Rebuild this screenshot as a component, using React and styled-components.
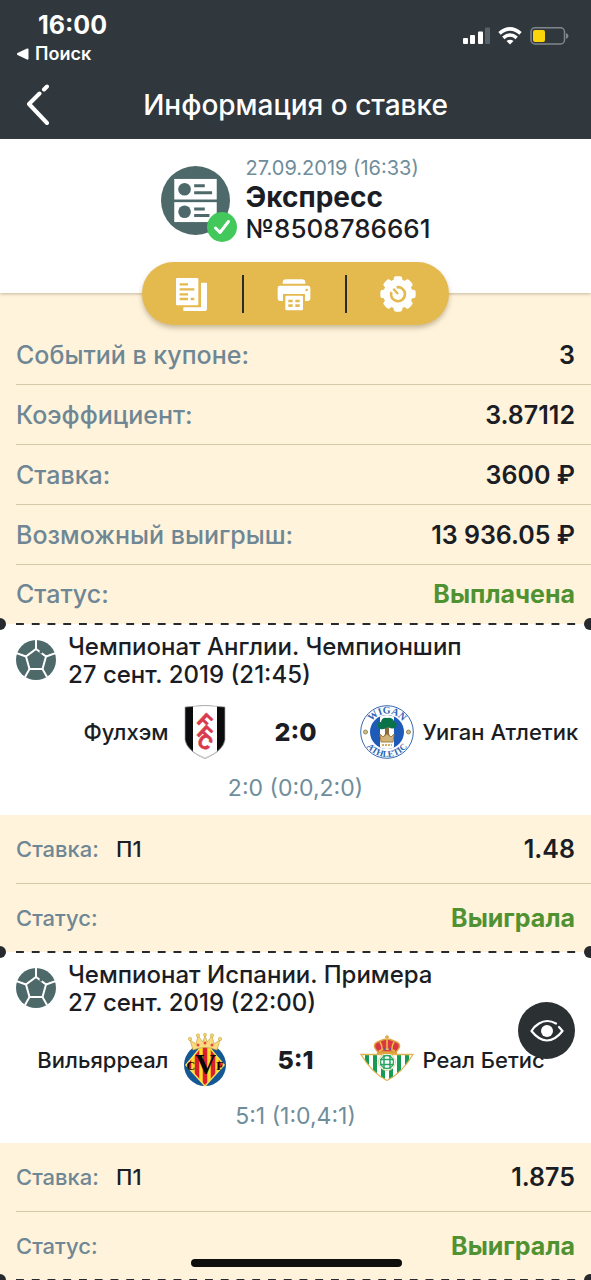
import React from "react";
import styled, { createGlobalStyle } from "styled-components";

const GlobalStyle = createGlobalStyle`
  *, *::before, *::after { box-sizing: border-box; }
  body {
    margin: 0;
    background: #fff3dc;
    color: #1b1d24;
    font-family: Inter, "Liberation Sans", sans-serif;
  }
  button { font: inherit; color: inherit; background: none; border: 0; padding: 0; cursor: pointer; }
  h1, h2, p, dl, dt, dd { margin: 0; font-weight: inherit; }
  svg { display: block; }
`;

const Screen = styled.div`
  height: 100vh;
  overflow: hidden auto;
  scrollbar-width: none;
`;

const Header = styled.header`
  background: #30383e;
  color: #fff;
`;

const StatusBar = styled.div`
  display: flex;
  justify-content: space-between;
  align-items: flex-start;
  height: 70px;
  padding: 11px 22px 0 17px;
`;

const Clock = styled.time`
  display: block;
  padding-left: 21px;
  font-size: 25px;
  line-height: 28px;
  font-weight: 700;
`;

const BackToApp = styled.a`
  display: flex;
  align-items: center;
  gap: 6px;
  padding-top: 4px;
  font-size: 18px;
  line-height: 22px;
  font-weight: 600;
  color: inherit;
  text-decoration: none;
`;

const Signals = styled.div`
  display: flex;
  align-items: center;
  gap: 8px;
  padding-top: 16px;
`;

const NavBar = styled.nav`
  display: grid;
  grid-template-columns: 78px 1fr 78px;
  align-items: center;
  height: 69px;
`;

const BackButton = styled.button`
  justify-self: start;
  margin-left: 25px;
`;

const PageTitle = styled.h1`
  text-align: center;
  white-space: nowrap;
  font-size: 28px;
  line-height: 32px;
  font-weight: 500;
`;

const Summary = styled.section`
  position: relative;
  display: flex;
  flex-direction: column;
  align-items: center;
  background: #fff;
  padding-top: 16px;
  box-shadow: 0 1px 3px rgba(90, 75, 40, 0.35);
`;

const Ticket = styled.div`
  display: flex;
  align-items: flex-start;
  gap: 16px;
  height: 107px;
`;

const TicketIcon = styled.div`
  position: relative;
  margin-top: 11px;
`;

const CheckBadge = styled.svg`
  position: absolute;
  right: -7px;
  bottom: -7px;
`;

const TicketDate = styled.p`
  font-size: 20px;
  line-height: 26px;
  color: #6f8d9a;
`;

const TicketType = styled.h2`
  font-size: 28px;
  line-height: 32px;
  font-weight: 700;
`;

const TicketNumber = styled.p`
  font-size: 26px;
  line-height: 32px;
  font-weight: 500;
`;

const Actions = styled.div`
  display: grid;
  grid-template-columns: repeat(3, 1fr);
  align-items: center;
  width: 307px;
  height: 63px;
  margin-bottom: -32px;
  border-radius: 32px;
  background: #e4ba4f;
  box-shadow: 0 3px 5px rgba(100, 80, 30, 0.35);
`;

const Action = styled.button`
  display: grid;
  place-items: center;
  height: 38px;

  &:not(:last-child) { border-right: 2px solid #2b2c2c; }
`;

const Rows = styled.dl`
  background: #fff3dc;
  padding-top: ${(p) => (p.$under ? "32px" : "0")};
`;

const Row = styled.div`
  display: flex;
  align-items: center;
  height: ${(p) => (p.$tall ? "69px" : "60px")};
  margin-left: 16px;
  padding-right: 16px;
  border-bottom: 1px solid #d5c8a5;

  &:last-child { border-bottom: 0; height: ${(p) => (p.$tall ? "67px" : "58px")}; }
`;

const Label = styled.dt`
  font-size: ${(p) => (p.$small ? "22px" : "25px")};
  line-height: 30px;
  font-weight: 500;
  color: #6f8794;
`;

const Pick = styled.dd`
  margin-left: 17px;
  font-size: 22px;
  line-height: 30px;
  font-weight: 500;
`;

const Value = styled.dd`
  margin-left: auto;
  font-size: 25px;
  line-height: 30px;
  font-weight: ${(p) => (p.$good ? 700 : 600)};
  color: ${(p) => (p.$good ? "#509232" : "#1b1d24")};
`;

const Tear = styled.div`
  position: relative;
  height: 2px;
  padding: 0 8px 0 16px;
  background: linear-gradient(#fff3dc 50%, #fff 50%);

  &::before, &::after {
    content: "";
    position: absolute;
    top: -5px;
    width: 12px;
    height: 12px;
    border-radius: 50%;
    background: #262a2f;
  }
  &::before { left: -6px; }
  &::after { right: -5px; }
`;

const Dashes = styled.div`
  height: 2px;
  background: linear-gradient(90deg, #262a2f 50%, transparent 50%) 0 0 / calc(100% / 36) 2px;
`;

const Match = styled.section`
  background: #fff;
`;

const MatchHead = styled.div`
  display: flex;
  gap: 12px;
  padding: 8px 16px 0;
`;

const BallIcon = styled.svg`
  flex: none;
  margin-top: 7px;
`;

const League = styled.h2`
  font-size: 24px;
  line-height: 28px;
  font-weight: 500;
`;

const Teams = styled.div`
  display: grid;
  grid-template-columns: minmax(0, 1fr) 54px 128px 54px minmax(0, 1fr);
  align-items: center;
  height: 60px;
  margin-top: 13px;
`;

const Team = styled.span`
  font-size: 22px;
  line-height: 28px;
  font-weight: 500;
  white-space: nowrap;
  padding: 0 9px;
  text-align: ${(p) => (p.$home ? "right" : "left")};
`;

const Score = styled.strong`
  text-align: center;
  font-size: 25px;
  line-height: 30px;
  font-weight: 800;
`;

const Periods = styled.p`
  height: 53px;
  padding-top: 12px;
  text-align: center;
  font-size: 23px;
  line-height: 28px;
  color: #6f8d9a;
`;

const WatchButton = styled.button`
  position: fixed;
  right: 16px;
  top: 1002px;
  display: grid;
  place-items: center;
  width: 57px;
  height: 57px;
  border-radius: 50%;
  background: #2b3033;
`;

const HomeIndicator = styled.div`
  position: fixed;
  left: 50%;
  bottom: 13px;
  width: 211px;
  height: 8px;
  margin-left: -105px;
  border-radius: 4px;
  background: #0e0f0d;
`;

const Cellular = () => (
  <svg width="27" height="18" viewBox="0 0 27 18" fill="#fff">
    <rect x="0" y="11" width="5" height="6" rx="1" />
    <rect x="7" y="8" width="5" height="9" rx="1" />
    <rect x="15" y="4.500" width="5" height="12.500" rx="1" />
    <rect x="22" y="0.500" width="5" height="16.500" rx="1" fill="#596168" />
  </svg>
);

const Wifi = () => (
  <svg width="24" height="18" viewBox="0 0 24 18" fill="none" stroke="#fff" strokeWidth="3.600">
    <path d="M1.500 6.400 Q12-2.500 22.500 6.400" />
    <path d="M5.300 10.800 Q12 5.200 18.700 10.800" />
    <path d="M12 17.500 L8.500 14 Q12 11.500 15.500 14Z" fill="#fff" stroke="none" />
  </svg>
);

const Battery = () => (
  <svg width="39" height="18" viewBox="0 0 39 18">
    <rect x="1" y="0.800" width="33.500" height="16.200" rx="4" fill="none" stroke="#80868b" strokeWidth="1.500" />
    <rect x="3" y="3" width="12" height="12" rx="2" fill="#fbd509" />
    <path d="M36 6 Q38.500 7 38.500 9 Q38.500 11 36 12Z" fill="#80868b" />
  </svg>
);

const DocsIcon = () => (
  <svg width="36" height="36" viewBox="0 0 108 108">
    <path d="M81 20H99V99Q99 105 93 105H28V94H81Z" fill="#fff" />
    <rect x="6" y="6" width="67" height="82" rx="3" fill="#fff" />
    <path d="M17 25H42M17 40H61M17 55H42M17 69H42M50 69H61" stroke="#e4ba4f" strokeWidth="7" />
  </svg>
);

const PrinterIcon = () => (
  <svg width="36" height="36" viewBox="0 0 108 108">
    <path d="M20 23V20Q20 10 31 10H77Q88 10 88 20V23Z" fill="#fff" />
    <path d="M12 29H96Q103 29 103 36V67Q103 75 95 75H87V54H21V75H13Q5 75 5 67V36Q5 29 12 29Z" fill="#fff" />
    <rect x="28" y="59" width="53" height="44" rx="4" fill="#fff" />
    <path d="M37 75H50M58 75H71M37 89H50M58 89H71" stroke="#e4ba4f" strokeWidth="8" />
    <circle cx="92" cy="42" r="4" fill="#e4ba4f" />
  </svg>
);

const GearIcon = () => (
  <svg width="36" height="36" viewBox="0 0 108 108">
    <g fill="#fff">
      <circle cx="54" cy="54" r="44" />
      {[0, 45, 90, 135].map((a) => (
        <rect key={a} x="41" y="1" width="26" height="106" rx="7" transform={`rotate(${a} 54 54)`} />
      ))}
    </g>
    <path d="M50 34A21 21 0 1 1 34 48" fill="none" stroke="#e4ba4f" strokeWidth="8" />
    <path d="M54 54L40 38" stroke="#e4ba4f" strokeWidth="7" />
  </svg>
);

const CouponIcon = () => (
  <svg width="69" height="69" viewBox="0 0 208 208">
    <circle cx="104" cy="104" r="104" fill="#4e696a" />
    <rect x="40" y="39" width="128" height="62" fill="#fff" />
    <rect x="40" y="109" width="128" height="60" fill="#fff" />
    <g fill="#4e696a">
      <circle cx="71" cy="70" r="19" />
      <circle cx="71" cy="138" r="19" />
      <path d="M100 55h32v9h-32zM100 76h54v9h-54zM100 125h32v9h-32zM100 145h46v9h-46z" />
    </g>
  </svg>
);

const Ball = () => (
  <BallIcon width="40" height="40" viewBox="0 0 40 40">
    <circle cx="20" cy="20" r="20" fill="#4e696a" />
    <g fill="none" stroke="#fff" strokeWidth="2">
      <path d="M20 9L30 16.500L26.500 29H13.500L10 16.500Z" />
      <path d="M20 9V0M30 16.500L40 13M26.500 29L31 37M13.500 29L9 37M10 16.500L0 13" />
    </g>
    <path d="M24 11L26 12.800" stroke="#4e696a" strokeWidth="3" />
  </BallIcon>
);

const FulhamCrest = () => (
  <svg width="54" height="54" viewBox="0 0 54 54">
    <clipPath id="fulhamShield">
      <path d="M7 2Q27-1 47 2V35Q45 46 27 54Q9 46 7 35Z" />
    </clipPath>
    <g clipPath="url(#fulhamShield)">
      <rect width="54" height="54" fill="#0b0b0d" />
      <rect x="15" width="24" height="54" fill="#fff" />
    </g>
    <path d="M7 2Q27-1 47 2V35Q45 46 27 53Q9 46 7 35Z" fill="none" stroke="#a9a9a9" strokeWidth="0.700" />
    <g fill="#d93a4c" stroke="#d93a4c" strokeWidth="0.600" fontFamily="Inter, sans-serif" fontWeight="700" fontSize="19" textAnchor="middle">
      <text transform="translate(22 21) rotate(43)">F</text>
      <text transform="translate(22 33) rotate(43)">F</text>
      <text transform="translate(24 43) rotate(28)">C</text>
    </g>
  </svg>
);

const WiganCrest = () => (
  <svg width="54" height="54" viewBox="0 0 54 54">
    <circle cx="27" cy="27" r="26.300" fill="#fff" stroke="#3569b3" strokeWidth="1" />
    <circle cx="27" cy="27" r="17" fill="#1e5bb8" />
    <path d="M20 11.500Q27 8.500 34 11.500V42.500Q27 45.500 20 42.500Z" fill="#fff" />
    <path d="M25 22H29V29L31 32H23L25 29Z" fill="#8a6a3d" />
    <path d="M18 21Q17 17 21 17Q22 12 27 13Q32 12 34 16Q38 18 36 22Q33 25 28 22Q24 25 20 24Q18 23 18 21Z" fill="#087348" />
    <path d="M20 29L23 32L27 29L31 32L34 29L33 37H21Z" fill="#d0b37a" stroke="#a6803d" strokeWidth="1" />
    <path d="M22 40H32" stroke="#cbb070" strokeWidth="2" strokeDasharray="2 1" />
    <circle cx="5.500" cy="27" r="2" fill="#d3bc7c" stroke="#8f8968" />
    <circle cx="48.500" cy="27" r="2" fill="#d3bc7c" stroke="#8f8968" />
    <path id="wiganTop" d="M8.500 27A18.500 18.500 0 0 1 45.500 27" fill="none" />
    <path id="wiganBottom" d="M2 27A25 25 0 0 0 52 27" fill="none" />
    <g fill="#2f65b3" fontFamily="Liberation Serif, serif" fontWeight="700" textAnchor="middle">
      <text fontSize="10"><textPath href="#wiganTop" startOffset="50%">WIGAN</textPath></text>
      <text fontSize="9"><textPath href="#wiganBottom" startOffset="50%">ATHLETIC</textPath></text>
    </g>
  </svg>
);

const VillarrealCrest = () => (
  <svg width="54" height="54" viewBox="0 0 54 54">
    <circle cx="27" cy="32" r="21" fill="#145795" />
    <path d="M27 8L47 32L27 54L7 32Z" fill="#ffe35a" />
    <clipPath id="villarrealDiamond"><path d="M27 10L45 32L27 52L9 32Z" /></clipPath>
    <g clipPath="url(#villarrealDiamond)">
      <rect width="54" height="54" fill="#ffdd28" />
      <path d="M11 0V54M19 0V54M27 0V54M35 0V54M43 0V54" stroke="#dc1d2d" strokeWidth="4.500" />
    </g>
    <path d="M15 17L12 7L18 11L20 3L25 9L27 2L29 9L34 3L36 11L42 7L39 17Q27 12 15 17Z" fill="#f9dc82" stroke="#c9a040" strokeWidth="0.700" />
    <g fill="#e54b40">
      <circle cx="20" cy="12" r="1.500" /><circle cx="27" cy="10" r="1.500" /><circle cx="34" cy="12" r="1.500" />
    </g>
    <g fill="#f6d76c" stroke="#c09a3c" strokeWidth="0.500">
      <circle cx="12" cy="6" r="1.700" /><circle cx="20" cy="2.500" r="1.700" /><circle cx="27" cy="1.800" r="1.500" />
      <circle cx="34" cy="2.500" r="1.700" /><circle cx="42" cy="6" r="1.700" />
    </g>
    <text x="27" y="41" fill="#080808" fontFamily="Liberation Serif, serif" fontWeight="700" textAnchor="middle">
      <tspan fontSize="12" dy="-4">C</tspan>
      <tspan fontSize="29" dy="4">V</tspan>
      <tspan fontSize="12" dy="-4">F</tspan>
    </text>
  </svg>
);

const BetisCrest = () => (
  <svg width="54" height="54" viewBox="0 0 54 54">
    <clipPath id="betisShield"><path d="M1 21.500H53Q42 40 27 47.500Q12 40 1 21.500Z" /></clipPath>
    <g clipPath="url(#betisShield)">
      <rect width="54" height="54" fill="#fff" />
      <path d="M7 20V54M15 20V54M23 20V54M31 20V54M39 20V54M47 20V54" stroke="#149c55" strokeWidth="4" />
    </g>
    <path d="M1 21.500H53Q42 40 27 47.500Q12 40 1 21.500Z" fill="none" stroke="#e1b552" strokeWidth="1.300" />
    <circle cx="27" cy="29" r="8.500" fill="#fff" stroke="#e6d59e" />
    <circle cx="27" cy="29" r="6.500" fill="none" stroke="#29a466" strokeWidth="1.300" />
    <path d="M24 22V36M30 22V36M20 26.500H34M20 31.500H34" stroke="#29a466" strokeWidth="1.500" fill="none" />
    <path d="M18 19Q10 11 20 8Q24 6 27 6Q30 6 34 8Q44 11 36 19Z" fill="#d93842" stroke="#dda63f" strokeWidth="1.500" />
    <path d="M19 18Q27 14 35 18M27 6V17M20 9Q22 12 22 16M34 9Q32 12 32 16" stroke="#efbd4a" strokeWidth="1.500" fill="none" />
    <circle cx="24.500" cy="16" r="1.300" fill="#7b4aa0" /><circle cx="30" cy="16" r="1.300" fill="#7b4aa0" />
    <path d="M27 2V6M25 4H29" stroke="#dda63f" strokeWidth="1.300" />
    <path d="M17 20H37" stroke="#e1a33e" strokeWidth="2" />
  </svg>
);

const summaryRows = [
  ["Событий в купоне:", "3"],
  ["Коэффициент:", "3.87112"],
  ["Ставка:", "3600 ₽"],
  ["Возможный выигрыш:", "13 936.05 ₽"],
  ["Статус:", "Выплачена", true],
];

const matches = [
  {
    league: "Чемпионат Англии. Чемпионшип", date: "27 сент. 2019 (21:45)",
    home: "Фулхэм", away: "Уиган Атлетик", HomeCrest: FulhamCrest, AwayCrest: WiganCrest,
    score: "2:0", periods: "2:0 (0:0,2:0)", odds: "1.48",
  },
  {
    league: "Чемпионат Испании. Примера", date: "27 сент. 2019 (22:00)",
    home: "Вильярреал", away: "Реал Бетис", HomeCrest: VillarrealCrest, AwayCrest: BetisCrest,
    score: "5:1", periods: "5:1 (1:0,4:1)", odds: "1.875",
  },
];

const TearLine = () => <Tear><Dashes /></Tear>;

const MatchCard = ({ match }) => {
  const { HomeCrest, AwayCrest } = match;
  return (
    <Match>
      <MatchHead>
        <Ball />
        <div>
          <League>{match.league}</League>
          <League as="p">{match.date}</League>
        </div>
      </MatchHead>
      <Teams>
        <Team $home>{match.home}</Team>
        <HomeCrest />
        <Score>{match.score}</Score>
        <AwayCrest />
        <Team>{match.away}</Team>
      </Teams>
      <Periods>{match.periods}</Periods>
      <Rows>
        <Row $tall>
          <Label $small>Ставка:</Label>
          <Pick>П1</Pick>
          <Value>{match.odds}</Value>
        </Row>
        <Row $tall>
          <Label $small>Статус:</Label>
          <Value $good>Выиграла</Value>
        </Row>
      </Rows>
    </Match>
  );
};

export default function App() {
  return (
    <Screen>
      <GlobalStyle />
      <Header>
        <StatusBar>
          <div>
            <Clock>16:00</Clock>
            <BackToApp href="#search">
              <svg width="12" height="12" viewBox="0 0 12 12" fill="#fff">
                <path d="M0.500 5Q-0.500 6 0.500 7L10 11.500Q11.500 12 11.500 10.500V1.500Q11.500 0 10 0.500Z" />
              </svg>
              Поиск
            </BackToApp>
          </div>
          <Signals>
            <Cellular />
            <Wifi />
            <Battery />
          </Signals>
        </StatusBar>
        <NavBar>
          <BackButton aria-label="Назад">
            <svg width="26" height="42" viewBox="0 0 26 42" fill="none" stroke="#fff" strokeWidth="4" strokeLinecap="round" strokeLinejoin="round">
              <path d="M14.500 9.500L4 20L22 39M19 5.500L22 2.500" />
            </svg>
          </BackButton>
          <PageTitle>Информация о ставке</PageTitle>
        </NavBar>
      </Header>
      <main>
        <Summary>
          <Ticket>
            <TicketIcon>
              <CouponIcon />
              <CheckBadge width="30" height="30" viewBox="0 0 30 30">
                <circle cx="15" cy="15" r="15" fill="#43c95b" />
                <path d="M8.500 16L13 20.500L21.500 9.500" fill="none" stroke="#fff" strokeWidth="3" strokeLinecap="round" strokeLinejoin="round" />
              </CheckBadge>
            </TicketIcon>
            <div>
              <TicketDate>27.09.2019 (16:33)</TicketDate>
              <TicketType>Экспресс</TicketType>
              <TicketNumber>№8508786661</TicketNumber>
            </div>
          </Ticket>
          <Actions>
            <Action aria-label="Копировать"><DocsIcon /></Action>
            <Action aria-label="Печать"><PrinterIcon /></Action>
            <Action aria-label="Настройки"><GearIcon /></Action>
          </Actions>
        </Summary>
        <Rows $under>
          {summaryRows.map(([label, value, good]) => (
            <Row key={label}>
              <Label>{label}</Label>
              <Value $good={good}>{value}</Value>
            </Row>
          ))}
        </Rows>
        {matches.map((match) => (
          <React.Fragment key={match.league}>
            <TearLine />
            <MatchCard match={match} />
          </React.Fragment>
        ))}
        <TearLine />
      </main>
      <WatchButton aria-label="Показать">
        <svg width="34" height="24" viewBox="0 0 34 24" fill="none" stroke="#fff" strokeWidth="2.200" strokeLinecap="round" strokeLinejoin="round">
          <path d="M26 4.500Q17-0.500 9 4.500Q4 7.500 1.500 12Q9 21.500 17 21.500Q25 21.500 32.500 12L29 8" />
          <circle cx="17" cy="12" r="6" fill="#fff" stroke="none" />
        </svg>
      </WatchButton>
      <HomeIndicator />
    </Screen>
  );
}
